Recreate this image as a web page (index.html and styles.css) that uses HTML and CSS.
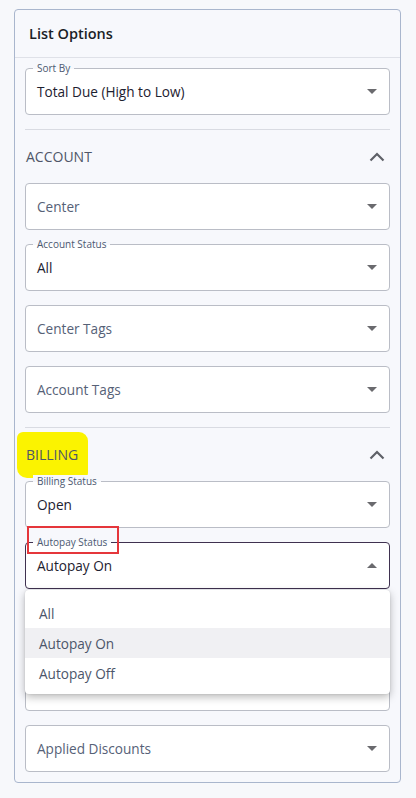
FILE: index.html
```html
<!DOCTYPE html>
<html>
<head>
<meta charset="utf-8">
<link rel="stylesheet" href="styles.css">
</head>
<body>
<div class="panel">
  <div class="panel-header">List Options</div>
  <div class="panel-body">
    <div class="field">
      <span class="field-label">Sort By</span>
      <span class="field-value">Total Due (High to Low)</span>
      <span class="caret"></span>
    </div>
    <div class="divider"></div>

    <div class="section-head">
      <span class="section-title">ACCOUNT</span>
      <svg class="chev" width="16" height="10" viewBox="0 0 16 10"><polyline points="1.5,8.5 8,2 14.5,8.5" fill="none" stroke="#5f6168" stroke-width="2.2"/></svg>
    </div>
    <div class="fields">
      <div class="field"><span class="field-placeholder">Center</span><span class="caret"></span></div>
      <div class="field"><span class="field-label">Account Status</span><span class="field-value">All</span><span class="caret"></span></div>
      <div class="field"><span class="field-placeholder">Center Tags</span><span class="caret"></span></div>
      <div class="field"><span class="field-placeholder">Account Tags</span><span class="caret"></span></div>
    </div>
    <div class="divider"></div>

    <div class="section-head">
      <span class="section-title highlighted">BILLING</span>
      <svg class="chev" width="16" height="10" viewBox="0 0 16 10"><polyline points="1.5,8.5 8,2 14.5,8.5" fill="none" stroke="#5f6168" stroke-width="2.2"/></svg>
    </div>
    <div class="fields">
      <div class="field"><span class="field-label">Billing Status</span><span class="field-value">Open</span><span class="caret"></span></div>
      <div class="field active">
        <span class="field-label">Autopay Status</span>
        <span class="annot-box"></span>
        <span class="field-value">Autopay On</span>
        <span class="caret up"></span>
        <div class="menu">
          <div class="menu-item">All</div>
          <div class="menu-item selected">Autopay On</div>
          <div class="menu-item">Autopay Off</div>
        </div>
      </div>
      <div class="field"><span class="field-placeholder"></span><span class="caret"></span></div>
      <div class="field"><span class="field-placeholder"></span><span class="caret"></span></div>
      <div class="field"><span class="field-placeholder">Applied Discounts</span><span class="caret"></span></div>
    </div>
  </div>
</div>
</body>
</html>
```

FILE: styles.css
```css
* { box-sizing: border-box; }
html, body { margin: 0; padding: 0; }
body {
  background: #f7f8fb;
  font-family: "Open Sans", "Noto Sans", sans-serif;
  width: 416px;
  height: 798px;
  overflow: hidden;
}
.panel {
  margin: 9px 15px 0 14px;
  border: 1px solid #a9b6cd;
  border-radius: 4px;
  background: #f7f8fc;
}
.panel-header {
  height: 48px;
  display: flex;
  align-items: center;
  padding: 0 14px;
  font-size: 14.5px;
  font-weight: 600;
  color: #1b1e27;
  border-bottom: 1px solid #dfe1e8;
}
.panel-body {
  padding: 10px 10px 10px 10px;
}
.fields {
  display: flex;
  flex-direction: column;
  gap: 14px;
}
.field {
  position: relative;
  height: 47px;
  border: 1px solid #babdc6;
  border-radius: 4px;
  background: #fff;
  display: flex;
  align-items: center;
  padding: 0 12px 0 11px;
}
.field.active {
  border-color: #3f3150;
}
.field-label {
  position: absolute;
  top: -7px;
  left: 7px;
  padding: 0 4px;
  font-size: 10px;
  line-height: 13px;
  color: #4c5870;
  background: linear-gradient(to bottom, #f7f8fc 0, #f7f8fc 7px, #fff 7px, #fff 100%);
}
.field-value {
  flex: 1;
  font-size: 13.6px;
  color: #1d2130;
}
.field-placeholder {
  flex: 1;
  font-size: 13.6px;
  color: #566177;
}
.caret {
  width: 0;
  height: 0;
  border-left: 5.5px solid transparent;
  border-right: 5.5px solid transparent;
  border-top: 5px solid #6a6a6e;
}
.caret.up {
  border-top: none;
  border-bottom: 5px solid #6a6a6e;
}
.divider {
  height: 1px;
  background: #d9dbe2;
  margin-top: 14px;
}
.section-head {
  display: flex;
  align-items: center;
  justify-content: space-between;
  padding: 16px 5px 15px 1px;
  line-height: 22px;
}
.section-title {
  position: relative;
  font-size: 14px;
  color: #4f5668;
}
.section-title.highlighted {
  z-index: 0;
}
.section-title.highlighted::before {
  content: "";
  position: absolute;
  left: -9px;
  right: -10px;
  top: -12px;
  bottom: -12px;
  background: #fbf300;
  border-radius: 6px 9px 5px 10px;
  z-index: -1;
}
.chev {
  display: block;
}
.annot-box {
  position: absolute;
  left: 1px;
  top: -17px;
  width: 92px;
  height: 28px;
  border: 2.5px solid #e5363b;
}
.menu {
  position: absolute;
  top: 47px;
  left: -1px;
  right: -1px;
  background: #fff;
  border-radius: 4px;
  box-shadow: 0 3px 8px rgba(0,0,0,0.28), 0 0 2px rgba(0,0,0,0.12);
  padding: 8px 0 6px;
  z-index: 5;
}
.menu-item {
  height: 30px;
  display: flex;
  align-items: center;
  padding-left: 14px;
  font-size: 13.6px;
  color: #4c566a;
}
.menu-item.selected {
  background: #f0f0f3;
}
```
